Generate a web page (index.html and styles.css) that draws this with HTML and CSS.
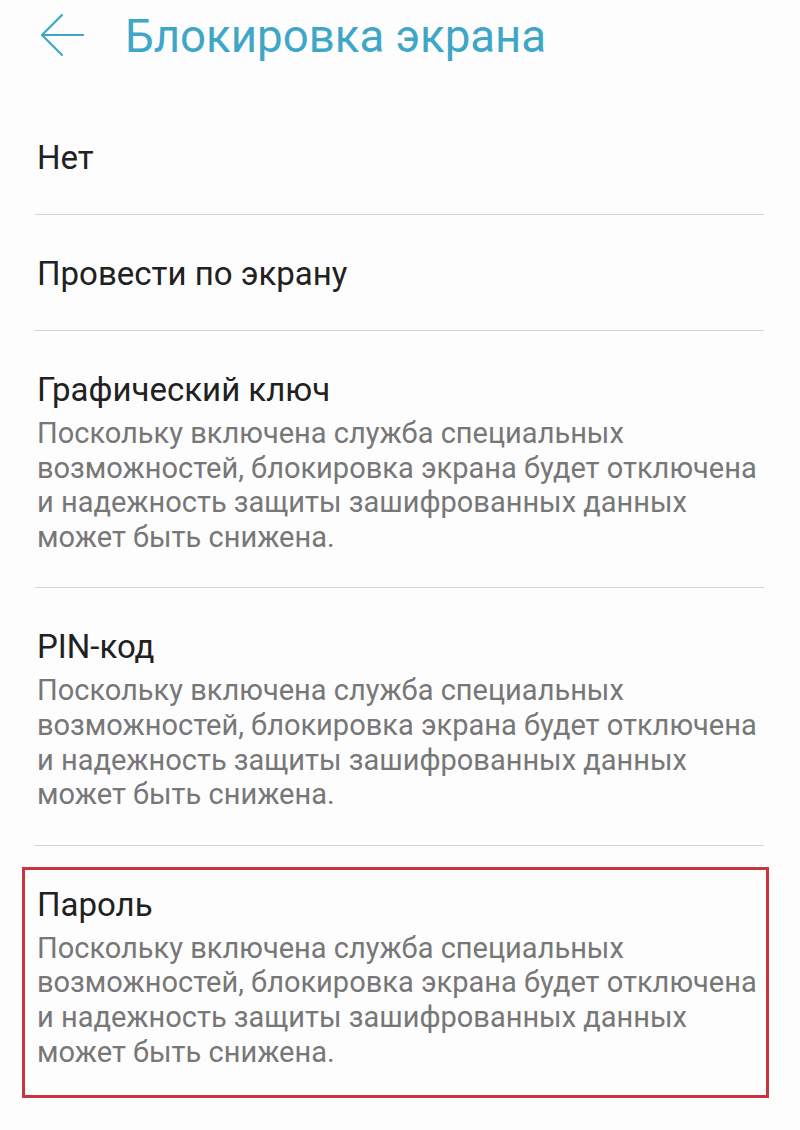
FILE: index.html
```html
<!DOCTYPE html>
<html lang="ru">

<head>
    <meta charset="UTF-8">
    <meta name="viewport" content="width=device-width, initial-scale=1.0">
    <title>Блокировка экрана</title>
    <link rel="stylesheet" href="styles.css">
</head>

<body>
    <!-- шапка -->
    <header class="top-bar">
        <a href="#" class="back-btn" aria-label="Назад">
            <svg width="44" height="44" viewBox="0 0 44 44" fill="none" stroke="currentColor" stroke-width="2.2" stroke-linecap="round" stroke-linejoin="round">
                <path d="M2 22 H43" />
                <path d="M22 2 L2 22 L22 42" />
            </svg>
        </a>
        <h1>Блокировка экрана</h1>
    </header>

    <!-- список способов -->
    <ul class="lock-list">
        <li class="lock-item">
            <div class="lock-title">Нет</div>
        </li>
        <li class="lock-item">
            <div class="lock-title">Провести по экрану</div>
        </li>
        <li class="lock-item">
            <div class="lock-title">Графический ключ</div>
            <div class="lock-desc">Поскольку включена служба специальных возможностей, блокировка экрана будет отключена и надежность защиты зашифрованных данных может быть снижена.</div>
        </li>
        <li class="lock-item">
            <div class="lock-title">PIN-код</div>
            <div class="lock-desc">Поскольку включена служба специальных возможностей, блокировка экрана будет отключена и надежность защиты зашифрованных данных может быть снижена.</div>
        </li>
        <li class="lock-item marked">
            <div class="lock-title">Пароль</div>
            <div class="lock-desc">Поскольку включена служба специальных возможностей, блокировка экрана будет отключена и надежность защиты зашифрованных данных может быть снижена.</div>
        </li>
    </ul>
</body>

</html>
```

FILE: styles.css
```css
/* базовые стили */
body {
    margin: 0;
    background-color: #fdfdfd;
    font-family: Roboto, "Noto Sans", sans-serif;
    color: #212121;
}

/* шапка */
.top-bar {
    height: 99px;
    display: flex;
    align-items: flex-start;
    box-sizing: border-box;
    padding: 13px 0 0 40px;
}

.back-btn {
    color: #3ea7c8;
    display: block;
    width: 44px;
    height: 44px;
}

.back-btn svg {
    display: block;
}

.top-bar h1 {
    margin: -4px 0 0 41px;
    font-size: 45.6px;
    font-weight: 400;
    line-height: 56px;
    color: #3ea7c8;
}

/* список */
.lock-list {
    list-style: none;
    margin: 0 36px 0 35px;
    padding: 0;
}

.lock-item {
    padding: 39px 0 36px 2px;
    border-bottom: 1px solid #d4d4d4;
}

.lock-title {
    font-size: 33px;
    line-height: 40px;
}

.lock-desc {
    margin: 6px 0 -3px;
    font-size: 29px;
    line-height: 34.6px;
    color: #777;
}

/* выделенный пункт */
.lock-item.marked {
    position: relative;
    border-bottom: none;
}

.lock-item.marked::after {
    content: "";
    position: absolute;
    left: -13px;
    top: 21px;
    right: -5px;
    bottom: 4px;
    border: 3px solid #c9343e;
}
```
